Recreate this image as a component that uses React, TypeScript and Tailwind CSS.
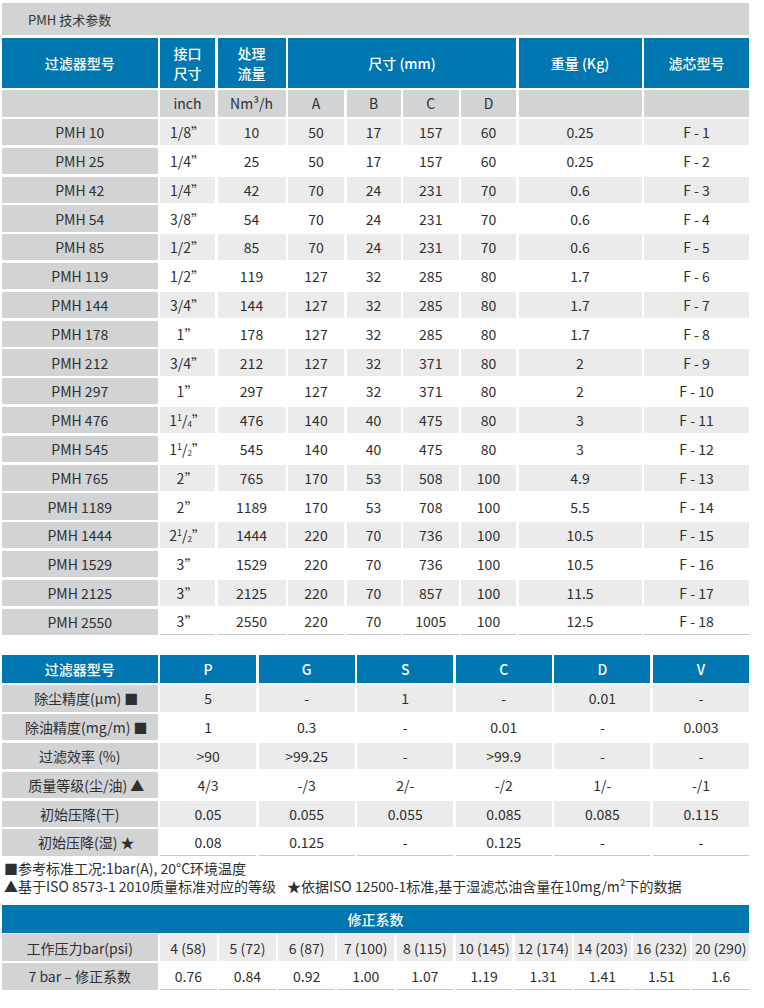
import React from "react";

const BLUE = "bg-[#0077b0]";
const frac = (w: string, n: string, d: string) => (
  <span>
    {w}
    <sup className="text-[9px] top-[-0.6em]">{n}</sup>/<sub className="text-[8px] bottom-[-0.1em]">{d}</sub>”
  </span>
);

const rows1: React.ReactNode[][] = [
  ["PMH 10", "1/8”", "10", "50", "17", "157", "60", "0.25", "F - 1"],
  ["PMH 25", "1/4”", "25", "50", "17", "157", "60", "0.25", "F - 2"],
  ["PMH 42", "1/4”", "42", "70", "24", "231", "70", "0.6", "F - 3"],
  ["PMH 54", "3/8”", "54", "70", "24", "231", "70", "0.6", "F - 4"],
  ["PMH 85", "1/2”", "85", "70", "24", "231", "70", "0.6", "F - 5"],
  ["PMH 119", "1/2”", "119", "127", "32", "285", "80", "1.7", "F - 6"],
  ["PMH 144", "3/4”", "144", "127", "32", "285", "80", "1.7", "F - 7"],
  ["PMH 178", "1”", "178", "127", "32", "285", "80", "1.7", "F - 8"],
  ["PMH 212", "3/4”", "212", "127", "32", "371", "80", "2", "F - 9"],
  ["PMH 297", "1”", "297", "127", "32", "371", "80", "2", "F - 10"],
  ["PMH 476", frac("1", "1", "4"), "476", "140", "40", "475", "80", "3", "F - 11"],
  ["PMH 545", frac("1", "1", "2"), "545", "140", "40", "475", "80", "3", "F - 12"],
  ["PMH 765", "2”", "765", "170", "53", "508", "100", "4.9", "F - 13"],
  ["PMH 1189", "2”", "1189", "170", "53", "708", "100", "5.5", "F - 14"],
  ["PMH 1444", frac("2", "1", "2"), "1444", "220", "70", "736", "100", "10.5", "F - 15"],
  ["PMH 1529", "3”", "1529", "220", "70", "736", "100", "10.5", "F - 16"],
  ["PMH 2125", "3”", "2125", "220", "70", "857", "100", "11.5", "F - 17"],
  ["PMH 2550", "3”", "2550", "220", "70", "1005", "100", "12.5", "F - 18"],
];

const rows2: string[][] = [
  ["除尘精度(µm) ■", "5", "-", "1", "-", "0.01", "-"],
  ["除油精度(mg/m) ■", "1", "0.3", "-", "0.01", "-", "0.003"],
  ["过滤效率 (%)", ">90", ">99.25", "-", ">99.9", "-", "-"],
  ["质量等级(尘/油) ▲", "4/3", "-/3", "2/-", "-/2", "1/-", "-/1"],
  ["初始压降(干)", "0.05", "0.055", "0.055", "0.085", "0.085", "0.115"],
  ["初始压降(湿) ★", "0.08", "0.125", "-", "0.125", "-", "-"],
];
const shifted = [true, true, false, true, false, true];

const pressures = ["4 (58)", "5 (72)", "6 (87)", "7 (100)", "8 (115)", "10 (145)", "12 (174)", "14 (203)", "16 (232)", "20 (290)"];
const factors = ["0.76", "0.84", "0.92", "1.00", "1.07", "1.19", "1.31", "1.41", "1.51", "1.6"];

const cell = "flex items-center justify-center text-center";
const hdr = `${cell} ${BLUE} text-white font-medium`;

export default function App() {
  return (
    <div className="w-[764px] h-[1008px] bg-white pt-[3px] pl-[2px] font-['Noto_Sans_CJK_SC','Noto_Sans',sans-serif] text-[#2f2f2f] text-[14px] leading-none">
      {/* Table 1 */}
      <div className="w-[747px]">
        <div className="h-[32px] bg-[#d2d3d5] flex items-center pl-[26px] text-[13px] text-[#333]">PMH 技术参数</div>
        <div className="mt-[2.5px] grid grid-cols-[155.5px_55px_68px_56px_54px_55.5px_55px_123px_105px] gap-x-[2.5px] gap-y-[2.5px]">
          <div className={`${hdr} h-[50px]`}>过滤器型号</div>
          <div className={`${hdr} h-[50px] leading-[20px]`}>接口<br />尺寸</div>
          <div className={`${hdr} h-[50px] leading-[20px]`}>处理<br />流量</div>
          <div className={`${hdr} h-[50px] col-span-4`}>尺寸 (mm)</div>
          <div className={`${hdr} h-[50px]`}>重量 (Kg)</div>
          <div className={`${hdr} h-[50px]`}>滤芯型号</div>

          {["", "inch", "Nm³/h", "A", "B", "C", "D", "", ""].map((t, i) => (
            <div key={i} className={`${cell} h-[26.5px] bg-[#d2d3d5]`}>{t}</div>
          ))}

          {rows1.map((r, ri) =>
            r.map((v, ci) => {
              const last = ri === rows1.length - 1;
              const bg = ci === 0 ? "bg-[#d2d3d5]" : ri % 2 === 0 ? "bg-[#ebebeb]" : "bg-white";
              const border = last && ci !== 0 ? "border-b border-[#c8c8c8]" : "";
              return (
                <div key={`${ri}-${ci}`} className={`${cell} h-[26.3px] ${bg} ${border}`}>
                  {v}
                </div>
              );
            })
          )}
        </div>
      </div>

      {/* Table 2 */}
      <div className="w-[747px] mt-[20.5px] grid grid-cols-[155.5px_repeat(6,1fr)] gap-x-[2.5px] gap-y-[2.5px]">
        {["过滤器型号", "P", "G", "S", "C", "D", "V"].map((t, i) => (
          <div key={i} className={`${hdr} h-[27.5px] ${i === 0 ? "" : ""}`}>{t}</div>
        ))}
        {rows2.map((r, ri) =>
          r.map((v, ci) => {
            const last = ri === rows2.length - 1;
            const bg = ci === 0 ? "bg-[#d2d3d5]" : ri % 2 === 0 ? "bg-[#ebebeb]" : "bg-white";
            const border = last && ci !== 0 ? "border-b border-[#c8c8c8]" : "";
            const pad = ci === 0 && shifted[ri] ? "pl-[13px] whitespace-nowrap" : "";
            return (
              <div key={`${ri}-${ci}`} className={`${cell} h-[26.3px] ${bg} ${border} ${pad}`}>
                {ci === 0 && shifted[ri] ? (
                  <span>
                    {v.slice(0, -2)}
                    <span className="ml-[3px]">{v.slice(-1)}</span>
                  </span>
                ) : (
                  v
                )}
              </div>
            );
          })
        )}
      </div>

      {/* Notes */}
      <div className="mt-[3px] pl-[2px] text-[14px] leading-[18px] text-[#2f2f2f]">
        <div>■参考标准工况:1bar(A), 20°C环境温度</div>
        <div className="flex whitespace-nowrap">
          <span>▲基于ISO 8573-1 2010质量标准对应的等级</span>
          <span className="ml-[11px]">★依据ISO 12500-1标准,基于湿滤芯油含量在10mg/m²下的数据</span>
        </div>
      </div>

      {/* Table 3 */}
      <div className="w-[747px] mt-[10px] grid grid-cols-[155.5px_repeat(10,1fr)] gap-x-[2.5px] gap-y-[1.8px]">
        <div className={`${hdr} h-[28px] col-span-11`}>修正系数</div>
        <div className={`${cell} h-[27px] bg-[#d2d3d5]`}>工作压力bar(psi)</div>
        {pressures.map((p, i) => (
          <div key={i} className={`${cell} h-[27px] bg-[#ebebeb] whitespace-nowrap`}>{p}</div>
        ))}
        <div className={`${cell} h-[26.5px] bg-[#d2d3d5]`}>7 bar – 修正系数</div>
        {factors.map((f, i) => (
          <div key={i} className={`${cell} h-[26.5px] bg-white border-b border-[#c8c8c8]`}>{f}</div>
        ))}
      </div>
    </div>
  );
}
